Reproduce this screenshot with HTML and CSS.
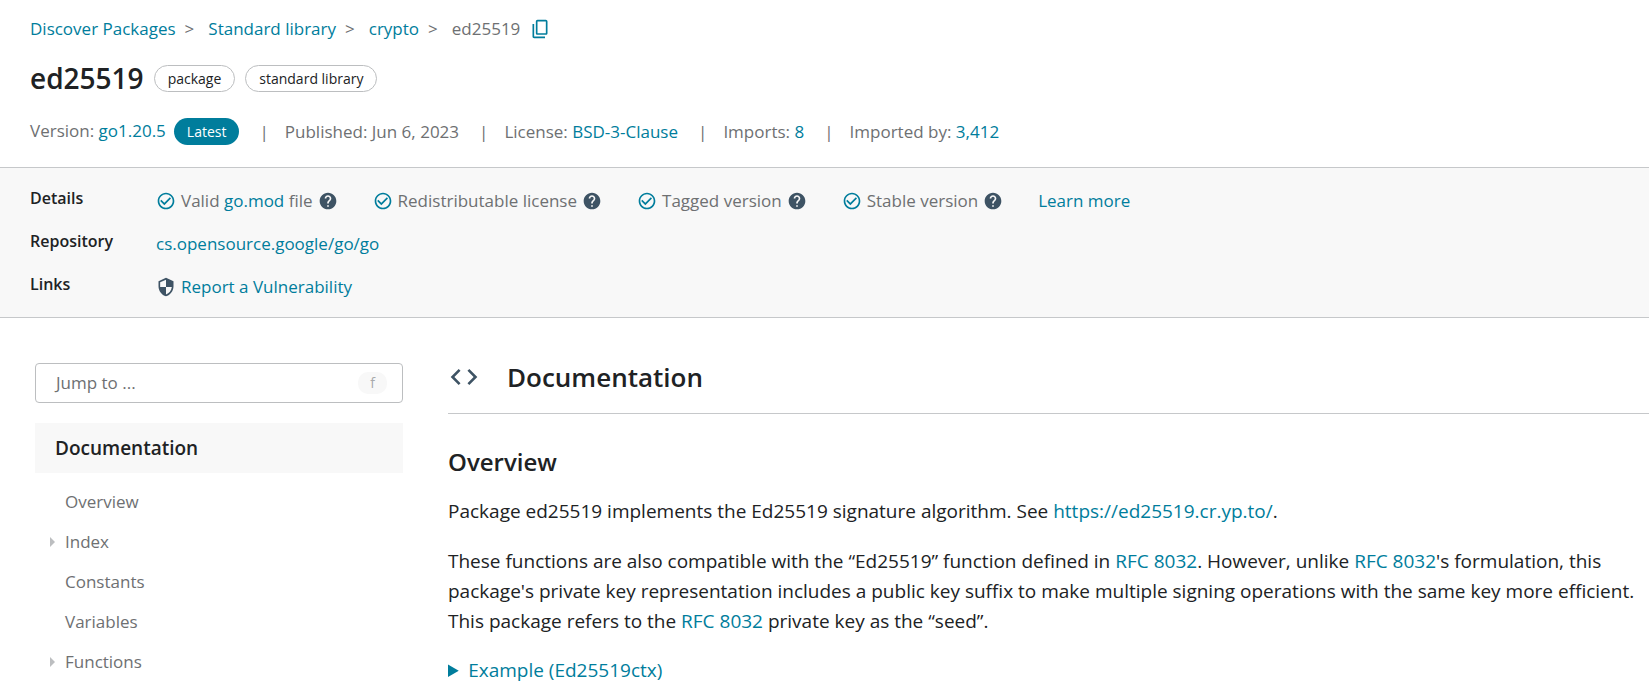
FILE: index.html
```
<!DOCTYPE html>
<html lang="en">
<head>
	<meta charset="UTF-8">
	<title>ed25519 package - crypto/ed25519 - Go Packages</title>
	<link rel="stylesheet" href="styles.css">
</head>
<body>
	<!-- icons shared by the details rows -->
	<svg class="sprite" aria-hidden="true">
		<symbol id="icon-check" viewBox="0 0 24 24">
			<path d="M16.59 7.58 10 14.17l-3.59-3.58L5 12l5 5 8-8zM12 2C6.48 2 2 6.48 2 12s4.48 10 10 10 10-4.48 10-10S17.52 2 12 2zm0 18c-4.42 0-8-3.58-8-8s3.58-8 8-8 8 3.58 8 8-3.58 8-8 8z"/>
		</symbol>
		<symbol id="icon-help" viewBox="0 0 24 24">
			<path d="M12 2C6.48 2 2 6.48 2 12s4.48 10 10 10 10-4.48 10-10S17.52 2 12 2zm1 17h-2v-2h2v2zm2.07-7.75-.9.92C13.45 12.9 13 13.5 13 15h-2v-.5c0-1.1.45-2.1 1.17-2.83l1.24-1.26c.37-.36.59-.86.59-1.41 0-1.1-.9-2-2-2s-2 .9-2 2H8c0-2.21 1.79-4 4-4s4 1.79 4 4c0 .88-.36 1.68-.93 2.25z"/>
		</symbol>
	</svg>

	<header class="header">
		<nav class="breadcrumb" aria-label="Breadcrumb">
			<a href="#">Discover Packages</a>
			<span class="breadcrumb-sep">&gt;</span>
			<a href="#">Standard library</a>
			<span class="breadcrumb-sep">&gt;</span>
			<a href="#">crypto</a>
			<span class="breadcrumb-sep">&gt;</span>
			<span>ed25519</span>
			<button class="copy" type="button" aria-label="Copy path to clipboard">
				<svg width="20" height="20" viewBox="0 0 24 24"><path d="M19 1H9C7.900 1 7 1.900 7 3v14c0 1.100.900 2 2 2h10c1.100 0 2-.900 2-2V3c0-1.100-.900-2-2-2zm0 16H9V3h10v14zM3 6v15c0 1.100.900 2 2 2h13v-2H5V6H3z"/></svg>
			</button>
		</nav>
		<div class="title">
			<h1>ed25519</h1>
			<span class="chip">package</span>
			<span class="chip">standard library</span>
		</div>
		<div class="meta">
			<span class="meta-item">Version: <a href="#">go1.20.5</a><span class="latest">Latest</span></span>
			<span class="meta-item">Published: Jun 6, 2023</span>
			<span class="meta-item">License: <a href="#">BSD-3-Clause</a></span>
			<span class="meta-item">Imports: <a href="#">8</a></span>
			<span class="meta-item">Imported by: <a href="#">3,412</a></span>
		</div>
	</header>

	<section class="unit">
		<h2>Details</h2>
		<ul class="checks">
			<li>
				<svg class="icon check"><use href="#icon-check"/></svg>
				<span>Valid <a href="#">go.mod</a> file</span>
				<svg class="icon help"><use href="#icon-help"/></svg>
			</li>
			<li>
				<svg class="icon check"><use href="#icon-check"/></svg>
				<span>Redistributable license</span>
				<svg class="icon help"><use href="#icon-help"/></svg>
			</li>
			<li>
				<svg class="icon check"><use href="#icon-check"/></svg>
				<span>Tagged version</span>
				<svg class="icon help"><use href="#icon-help"/></svg>
			</li>
			<li>
				<svg class="icon check"><use href="#icon-check"/></svg>
				<span>Stable version</span>
				<svg class="icon help"><use href="#icon-help"/></svg>
			</li>
			<li><a href="#">Learn more</a></li>
		</ul>
		<h2>Repository</h2>
		<div class="value"><a href="#">cs.opensource.google/go/go</a></div>
		<h2>Links</h2>
		<div class="value">
			<svg class="icon shield" viewBox="0 0 24 24"><path fill-rule="evenodd" d="M12 1 3 5v6c0 5.550 3.840 10.740 9 12 5.160-1.260 9-6.450 9-12V5zM12 12h7c-.530 4.120-3.280 7.790-7 8.940V12H5V6.300l7-3.110z"/></svg>
			<a href="#">Report a Vulnerability</a>
		</div>
	</section>

	<div class="content">
		<aside class="sidebar">
			<button class="jump" type="button">Jump to ... <kbd>f</kbd></button>
			<nav class="tree" aria-label="Outline">
				<a class="tree-head" href="#doc">Documentation</a>
				<a class="tree-item" href="#overview">Overview</a>
				<a class="tree-item parent" href="#">Index</a>
				<a class="tree-item" href="#">Constants</a>
				<a class="tree-item" href="#">Variables</a>
				<a class="tree-item parent" href="#">Functions</a>
			</nav>
		</aside>
		<main class="doc">
			<h2 class="doc-title" id="doc">
				<svg width="32" height="32" viewBox="0 0 24 24"><path d="M9.400 16.600 4.800 12l4.600-4.600L8 6l-6 6 6 6zm5.200 0 4.600-4.600-4.600-4.600L16 6l6 6-6 6z"/></svg>
				Documentation
			</h2>
			<h3 id="overview">Overview</h3>
			<p>Package ed25519 implements the Ed25519 signature algorithm. See <a href="#">https://ed25519.cr.yp.to/</a>.</p>
			<p>These functions are also compatible with the “Ed25519” function defined in <a href="#">RFC 8032</a>. However, unlike <a href="#">RFC 8032</a>'s formulation, this package's private key representation includes a public key suffix to make multiple signing operations with the same key more efficient. This package refers to the <a href="#">RFC 8032</a> private key as the “seed”.</p>
			<details class="example">
				<summary>Example (Ed25519ctx)</summary>
			</details>
		</main>
	</div>
</body>
</html>
```
FILE: styles.css
```
*{
	margin: 0;
	padding: 0;
	box-sizing: border-box;
}
body{
	font-family: "Open Sans", "Noto Sans", sans-serif;
	font-size: 17px;
	line-height: 24px;
	color: #202224;
	background: #fff;
	overflow-x: hidden;
}
a{
	color: #007d9c;
	text-decoration: none;
}
a:hover{
	text-decoration: underline;
}
button{
	font: inherit;
	background: none;
	border: none;
	cursor: pointer;
}
h1, h2, h3{
	font-weight: 600;
}
.sprite{
	display: none;
}
.header{
	padding: 16px 30px 22px;
	color: #6e7072;
}
.breadcrumb{
	display: flex;
	align-items: center;
	height: 25px;
}
.breadcrumb-sep{
	margin: 0 14px 0 9px;
}
.copy{
	display: flex;
	margin-left: 10px;
}
.copy svg{
	fill: #007d9c;
}
.title{
	display: flex;
	align-items: center;
	gap: 10px;
	margin-top: 17px;
	color: #202224;
}
h1{
	font-size: 28px;
	line-height: 40px;
}
.chip{
	padding: 0 13px;
	border: 1px solid #bcbec0;
	border-radius: 14px;
	font-size: 14px;
	line-height: 25px;
}
.meta{
	display: flex;
	align-items: center;
	margin-top: 19px;
	line-height: 27px;
}
.meta-item + .meta-item::before{
	content: "|";
	margin: 0 16px 0 20px;
}
.latest{
	margin-left: 8px;
	padding: 4px 13px;
	border-radius: 14px;
	background: #007d9c;
	color: #fff;
	font-size: 14px;
}
.unit{
	display: grid;
	grid-template-columns: 126px 1fr;
	row-gap: 18px;
	padding: 19px 30px;
	border: solid #c6c8ca;
	border-width: 1px 0;
	background: #f8f8f8;
	color: #6e7072;
	line-height: 23px;
}
.unit h2{
	font-size: 16px;
	color: #202224;
}
.checks{
	display: flex;
	list-style: none;
	gap: 35px;
}
.checks li, .value{
	display: flex;
	align-items: center;
	padding-top: 2px;
}
.icon{
	width: 20px;
	height: 20px;
}
.check{
	margin-right: 5px;
	fill: #007d9c;
}
.help{
	margin-left: 5px;
	fill: #3e5364;
}
.shield{
	margin-right: 5px;
	fill: #3e5364;
}
.content{
	display: grid;
	grid-template-columns: 368px 1fr;
	column-gap: 45px;
	padding: 40px 0 0 35px;
}
.sidebar{
	padding-top: 5px;
}
.jump{
	display: flex;
	align-items: center;
	justify-content: space-between;
	width: 100%;
	height: 40px;
	padding: 0 15px 0 20px;
	border: 1px solid #bcbec0;
	border-radius: 4px;
	color: #6e7072;
}
.jump kbd{
	padding: 0 12px;
	border-radius: 10px;
	background: #f8f8f8;
	color: #a8aaac;
	font-family: inherit;
	font-size: 14px;
	line-height: 22px;
}
.tree{
	margin-top: 20px;
}
.tree-head{
	display: block;
	margin-bottom: 9px;
	padding: 0 20px;
	background: #f8f8f8;
	color: #202224;
	font-size: 19px;
	font-weight: 600;
	line-height: 50px;
}
.tree-item{
	display: flex;
	align-items: center;
	padding-left: 30px;
	color: #6e7072;
	line-height: 40px;
}
.tree-item.parent{
	padding-left: 15px;
}
.tree-item.parent::before{
	content: "";
	margin-right: 10px;
	border: 5px solid transparent;
	border-left-color: #bcbec0;
	border-right: none;
}
.doc{
	font-size: 19px;
	line-height: 30px;
}
.doc-title{
	display: flex;
	align-items: center;
	gap: 27px;
	padding-bottom: 17px;
	border-bottom: 1px solid #c6c8ca;
	font-size: 26px;
	line-height: 38px;
}
.doc-title svg{
	fill: #3e5364;
}
.doc h3{
	margin-top: 30px;
	font-size: 24px;
	line-height: 35px;
}
.doc p{
	margin-top: 20px;
	padding-right: 5px;
}
.doc h3 + p{
	margin-top: 17px;
}
.example{
	margin-top: 19px;
}
.example summary{
	color: #007d9c;
	cursor: pointer;
}
```
